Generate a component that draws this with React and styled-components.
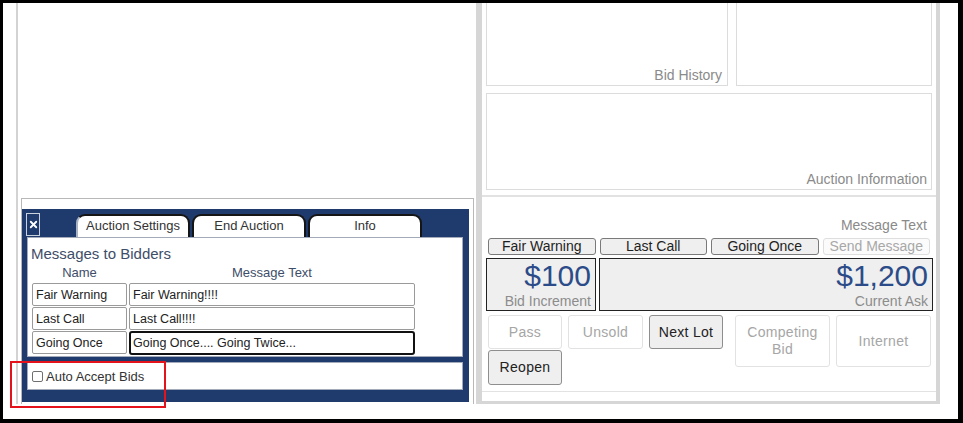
import React from "react";
import styled, { createGlobalStyle } from "styled-components";
import { X } from "lucide-react";

const GlobalStyle = createGlobalStyle`
  body {
    margin: 0;
    background: #fff;
    font-family: "Liberation Sans", Arial, sans-serif;
  }
`;

const Page = styled.div`
  position: relative;
  width: 963px;
  height: 423px;
  box-sizing: border-box;
  border-style: solid;
  border-color: #000;
  border-width: 3px 5px 4px 3px;
  background: #fff;
  overflow: hidden;
`;

const Main = styled.div`
  display: flex;
  height: 401px;
  padding-left: 13px;
`;

/* left column with the settings dialog */
const LeftPane = styled.div`
  width: 460px;
  box-sizing: border-box;
  border-left: 2px solid #d3d3d3;
  display: flex;
  flex-direction: column;
  justify-content: flex-end;
`;

const SettingsArea = styled.div`
  margin-left: 3px;
  width: 453px;
  height: 206px;
  box-sizing: border-box;
  border: 1px solid #b8b8b8;
  border-bottom: none;
  padding-top: 10px;
`;

const Dialog = styled.div`
  width: 447px;
  height: 193px;
  box-sizing: border-box;
  background: #1f3b6d;
  padding: 4px 6px 12px 5px;
  display: flex;
  flex-direction: column;
`;

const DialogHeader = styled.div`
  display: flex;
  align-items: flex-end;
  height: 24px;
`;

const CloseButton = styled.button`
  width: 14px;
  height: 23px;
  margin: 0 0 1px -1px;
  padding: 0;
  box-sizing: border-box;
  border: 1px solid #c9d1dd;
  background: #1f3b6d;
  color: #fff;
  display: flex;
  align-items: center;
  justify-content: center;
`;

const Tabs = styled.div`
  display: flex;
  gap: 2px;
  margin-left: 36px;
`;

const Tab = styled.div`
  width: 114px;
  height: 23px;
  box-sizing: border-box;
  background: #fff;
  border: 2px solid #151515;
  border-bottom: none;
  border-left-color: ${(p) => (p.$active ? "#a9b3c3" : "#151515")};
  border-radius: 9px 9px 0 0;
  font-size: 13px;
  color: #333;
  text-align: center;
  line-height: 20px;
`;

const TabPanel = styled.div`
  height: 120px;
  box-sizing: border-box;
  background: #fff;
  border: 1px solid #a3abba;
  padding: 7px 4px 0 3px;
`;

const PanelTitle = styled.div`
  font-size: 15px;
  line-height: 18px;
  color: #3e4d68;
`;

const MessageGrid = styled.div`
  display: grid;
  grid-template-columns: 95px 286px;
  column-gap: 2px;
  row-gap: 1px;
  padding-left: 1px;
`;

const ColumnHead = styled.div`
  font-size: 13px;
  line-height: 16px;
  color: #3e4d68;
  text-align: center;
  margin: 2px 0 1px;
`;

const TextInput = styled.input`
  height: ${(p) => (p.$focused ? "24px" : "23px")};
  box-sizing: border-box;
  margin: 0;
  padding: 0 ${(p) => (p.$focused ? "2px" : "3px")};
  border: ${(p) => (p.$focused ? "2px solid #111" : "1px solid #9a9a9a")};
  border-radius: ${(p) => (p.$focused ? "3px" : "2px")};
  font-family: "Liberation Sans", Arial, sans-serif;
  font-size: 12.5px;
  color: #222;
  background: #fff;
  outline: none;
`;

const OptionBox = styled.label`
  margin-top: 5px;
  height: 28px;
  box-sizing: border-box;
  background: #fff;
  border: 1px solid #a3abba;
  display: flex;
  align-items: center;
  padding-left: 4px;
  gap: 3px;
  font-size: 13px;
  color: #333;
`;

const CheckBox = styled.input`
  appearance: none;
  width: 11px;
  height: 11px;
  margin: 0;
  border: 1px solid #6f6f6f;
  border-radius: 2px;
  background: #fff;
`;

const Highlight = styled.div`
  position: absolute;
  left: 7px;
  top: 358px;
  width: 156px;
  height: 47px;
  box-sizing: border-box;
  border: 2px solid #e3121b;
`;

/* right column with the auctioneer controls */
const RightFrame = styled.div`
  width: 464px;
  box-sizing: border-box;
  border: 0 solid #d6d6d6;
  border-width: 0 4px 3px 6px;
  display: flex;
  flex-direction: column;
`;

const TopClip = styled.div`
  height: 83px;
  overflow: hidden;
  padding: 0 4px;
`;

const TopRow = styled.div`
  display: flex;
  gap: 8px;
  margin-top: -1px;
`;

const InfoBox = styled.div`
  box-sizing: border-box;
  width: ${(p) => p.$width || "auto"};
  flex: ${(p) => (p.$width ? "none" : "1")};
  height: ${(p) => p.$height};
  border: 1px solid #dcdcdc;
  display: flex;
  align-items: flex-end;
  justify-content: flex-end;
  padding: 0 ${(p) => p.$pr || "5px"} 2px 0;
  font-size: 14px;
  line-height: 16px;
  color: #8a8a8a;
`;

const InfoRow = styled.div`
  padding: 0 4px;
  margin-top: 7px;
  display: flex;
`;

const ControlPanel = styled.div`
  margin-top: 5px;
  border-top: 2px solid #e2e2e2;
  border-bottom: 1px solid #e2e2e2;
  padding: 20px 3px 6px 4px;
`;

const MessageLabel = styled.div`
  text-align: right;
  padding-right: 6px;
  font-size: 14px;
  line-height: 16px;
  color: #8a8a8a;
`;

const QuickRow = styled.div`
  display: flex;
  gap: 4px;
  margin-top: 5px;
  padding: 0 3px 0 2px;
`;

const QuickButton = styled.button`
  flex: 1;
  height: 17px;
  padding: 0;
  box-sizing: border-box;
  border: 1px solid ${(p) => (p.disabled ? "#dedede" : "#7a7a7a")};
  border-radius: 3px;
  background: ${(p) => (p.disabled ? "#fbfbfb" : "#efefef")};
  color: ${(p) => (p.disabled ? "#a8a8a8" : "#1e1e1e")};
  font-family: "Liberation Sans", Arial, sans-serif;
  font-size: 14px;
  line-height: 15px;
`;

const AmountRow = styled.div`
  display: flex;
  gap: 3px;
  margin-top: 3px;
  height: 53px;
`;

const AmountBox = styled.div`
  box-sizing: border-box;
  width: ${(p) => p.$width || "auto"};
  flex: ${(p) => (p.$width ? "none" : "1")};
  border: 1px solid #222;
  background: #efefef;
  text-align: right;
  padding-right: 4px;
`;

const Amount = styled.div`
  font-size: 30px;
  line-height: 34px;
  color: #2b4c88;
`;

const AmountLabel = styled.div`
  font-size: 14px;
  line-height: 16px;
  color: #8c8c8c;
`;

const ActionGrid = styled.div`
  display: grid;
  grid-template-columns: 74px 75px 74px 101px 95px;
  grid-template-rows: 34px 35px;
  column-gap: 6px;
  row-gap: 1px;
  margin-top: 4px;
  padding-left: 2px;
`;

const ActionButton = styled.button`
  width: ${(p) => (p.$shift ? "95px" : "100%")};
  height: ${(p) => (p.$tall ? "52px" : "100%")};
  grid-row: ${(p) => (p.$tall ? "span 2" : "auto")};
  align-self: start;
  justify-self: end;
  box-sizing: border-box;
  padding: 0 4px;
  border: 1px solid ${(p) => (p.disabled ? "#e2e2e2" : "#8e8e8e")};
  border-radius: 3px;
  background: ${(p) => (p.disabled ? "#fff" : "#efefef")};
  color: ${(p) => (p.disabled ? "#a6a6a6" : "#222")};
  font-family: "Liberation Sans", Arial, sans-serif;
  font-size: 14px;
  line-height: 17px;
  letter-spacing: 0.3px;
`;

const messages = [
  { name: "Fair Warning", text: "Fair Warning!!!!" },
  { name: "Last Call", text: "Last Call!!!!" },
  { name: "Going Once", text: "Going Once.... Going Twice...", focused: true },
];

export default function App() {
  return (
    <>
      <GlobalStyle />
      <Page>
        <Main>
          <LeftPane>
            <SettingsArea>
              <Dialog>
                <DialogHeader>
                  <CloseButton aria-label="Close">
                    <X size={11} strokeWidth={4} />
                  </CloseButton>
                  <Tabs>
                    <Tab $active>Auction Settings</Tab>
                    <Tab>End Auction</Tab>
                    <Tab>Info</Tab>
                  </Tabs>
                </DialogHeader>
                <TabPanel>
                  <PanelTitle>Messages to Bidders</PanelTitle>
                  <MessageGrid>
                    <ColumnHead>Name</ColumnHead>
                    <ColumnHead>Message Text</ColumnHead>
                    {messages.map((m) => (
                      <React.Fragment key={m.name}>
                        <TextInput defaultValue={m.name} />
                        <TextInput defaultValue={m.text} $focused={m.focused} />
                      </React.Fragment>
                    ))}
                  </MessageGrid>
                </TabPanel>
                <OptionBox>
                  <CheckBox type="checkbox" />
                  Auto Accept Bids
                </OptionBox>
              </Dialog>
            </SettingsArea>
          </LeftPane>

          <RightFrame>
            <TopClip>
              <TopRow>
                <InfoBox $width="242px" $height="84px">Bid History</InfoBox>
                <InfoBox $height="84px" />
              </TopRow>
            </TopClip>
            <InfoRow>
              <InfoBox $height="97px" $pr="4px">Auction Information</InfoBox>
            </InfoRow>
            <ControlPanel>
              <MessageLabel>Message Text</MessageLabel>
              <QuickRow>
                <QuickButton>Fair Warning</QuickButton>
                <QuickButton>Last Call</QuickButton>
                <QuickButton>Going Once</QuickButton>
                <QuickButton disabled>Send Message</QuickButton>
              </QuickRow>
              <AmountRow>
                <AmountBox $width="110px">
                  <Amount>$100</Amount>
                  <AmountLabel>Bid Increment</AmountLabel>
                </AmountBox>
                <AmountBox>
                  <Amount>$1,200</Amount>
                  <AmountLabel>Current Ask</AmountLabel>
                </AmountBox>
              </AmountRow>
              <ActionGrid>
                <ActionButton disabled>Pass</ActionButton>
                <ActionButton disabled>Unsold</ActionButton>
                <ActionButton>Next Lot</ActionButton>
                <ActionButton disabled $tall $shift>
                  Competing
                  <br />
                  Bid
                </ActionButton>
                <ActionButton disabled $tall>
                  Internet
                </ActionButton>
                <ActionButton>Reopen</ActionButton>
              </ActionGrid>
            </ControlPanel>
          </RightFrame>
        </Main>
        <Highlight />
      </Page>
    </>
  );
}
